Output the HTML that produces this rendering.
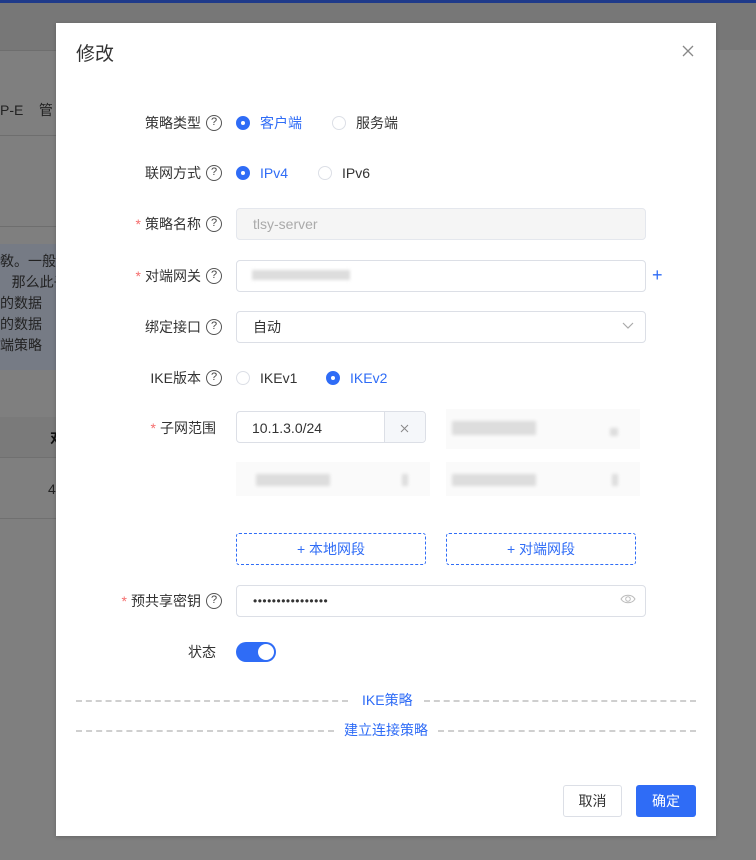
<!DOCTYPE html>
<html><head><meta charset="utf-8"><style>
*{box-sizing:border-box;margin:0;padding:0}
body{width:756px;height:860px;position:relative;overflow:hidden;background:#7f7f7f;font-family:"Liberation Sans","Noto Sans CJK SC",sans-serif;font-size:14px;color:#333}
.a{position:absolute}
.lbl{position:absolute;right:534px;font-size:14px;color:#333;white-space:nowrap;line-height:20px;display:flex;align-items:center}
.lbl.n{right:540px}
.lbl .req{color:#f56c6c;margin-right:4px}
.q{display:inline-block;width:16px;height:16px;border:1.3px solid #555;border-radius:50%;font-size:11px;line-height:13px;text-align:center;margin-left:5px;color:#444}
.inp{position:absolute;left:236px;width:410px;height:32px;border:1px solid #dcdfe6;border-radius:4px;background:#fff;padding-left:16px;line-height:30px;font-size:14px}
.radio{position:absolute;width:14px;height:14px;border-radius:50%;border:1px solid #dcdfe6;background:#fff}
.radio.on{background:#2f6cf6;border-color:#2f6cf6}
.radio.on:after{content:"";position:absolute;left:4px;top:4px;width:4px;height:4px;border-radius:50%;background:#fff}
.rt{position:absolute;line-height:20px}
.blur{position:absolute;background:#fafafa}
.bl{position:absolute;background:#ddd;filter:blur(1.5px)}
.dash{position:absolute;height:0;border-top:2px dashed #cfcfcf}
</style></head><body>
<div class="a" style="left:0;top:0;width:756px;height:3px;background:#1f3a8a"></div>
<div class="a" style="left:0;top:3px;width:756px;height:47px;background:#777"></div>
<div class="a" style="left:0;top:50px;width:56px;height:1px;background:#6e6e6e"></div>
<div class="a" style="left:0;top:100px;width:56px;font-size:14px;color:#222;line-height:20px">P-E&nbsp;&nbsp;&nbsp;&nbsp;管</div>
<div class="a" style="left:0;top:135px;width:56px;height:1px;background:#6e6e6e"></div>
<div class="a" style="left:0;top:226px;width:56px;height:1px;background:#6e6e6e"></div>
<div class="a" style="left:0;top:244px;width:56px;height:126px;background:#767b85;color:#222;font-size:14px;line-height:21px;padding-top:7px;white-space:nowrap;overflow:hidden">
<div>敎。一般设</div><div>&nbsp;&nbsp;&nbsp;那么此子</div><div>的数据</div><div>的数据</div><div>端策略</div></div>
<div class="a" style="left:0;top:417px;width:56px;height:40px;background:#7a7a7a"></div>
<div class="a" style="left:50px;top:428px;color:#111;font-weight:bold">对</div>
<div class="a" style="left:48px;top:481px;color:#222">4</div>
<div class="a" style="left:0;top:457px;width:56px;height:1px;background:#707070"></div>
<div class="a" style="left:0;top:518px;width:56px;height:1px;background:#707070"></div>

<div class="a" style="left:56px;top:23px;width:660px;height:813px;background:#fff;box-shadow:0 1px 4px rgba(0,0,0,.2)">
</div>
<div class="a" style="left:76px;top:43px;font-size:19px;color:#333;line-height:24px">修改</div>
<svg class="a" style="left:682px;top:45px" width="12" height="12"><path d="M1 1L11 11M11 1L1 11" stroke="#888" stroke-width="1.3"/></svg>

<div class="lbl" style="top:113px">策略类型<span class="q">?</span></div>
<div class="radio on" style="left:236px;top:116px"></div><div class="rt" style="left:260px;top:113px;color:#2f6cf6">客户端</div>
<div class="radio" style="left:332px;top:116px"></div><div class="rt" style="left:356px;top:113px">服务端</div>

<div class="lbl" style="top:163px">联网方式<span class="q">?</span></div>
<div class="radio on" style="left:236px;top:166px"></div><div class="rt" style="left:260px;top:163px;color:#2f6cf6">IPv4</div>
<div class="radio" style="left:318px;top:166px"></div><div class="rt" style="left:342px;top:163px">IPv6</div>

<div class="lbl" style="top:214px"><span class="req">*</span>策略名称<span class="q">?</span></div>
<div class="inp" style="top:208px;background:#f5f5f5;border-color:#e4e7ed;color:#aaa">tlsy-server</div>

<div class="lbl" style="top:266px"><span class="req">*</span>对端网关<span class="q">?</span></div>
<div class="inp" style="top:260px"></div>
<div class="bl" style="left:252px;top:270px;width:98px;height:10px"></div>
<div class="a" style="left:652px;top:263px;color:#2f6cf6;font-size:18px;line-height:24px">+</div>

<div class="lbl" style="top:317px">绑定接口<span class="q">?</span></div>
<div class="inp" style="top:311px">自动</div>
<svg class="a" style="left:622px;top:322px" width="12" height="8"><path d="M1 1L6 6L11 1" stroke="#aaa" fill="none" stroke-width="1.2"/></svg>

<div class="lbl" style="top:368px">IKE版本<span class="q">?</span></div>
<div class="radio" style="left:236px;top:371px"></div><div class="rt" style="left:260px;top:368px">IKEv1</div>
<div class="radio on" style="left:326px;top:371px"></div><div class="rt" style="left:350px;top:368px;color:#2f6cf6">IKEv2</div>

<div class="lbl n" style="top:418px"><span class="req">*</span>子网范围</div>
<div class="a" style="left:236px;top:411px;width:190px;height:32px;border:1px solid #dcdfe6;border-radius:4px;background:#fff"></div>
<div class="a" style="left:384px;top:412px;width:41px;height:30px;background:#f5f7fa;border-left:1px solid #dcdfe6;border-radius:0 4px 4px 0"></div>
<div class="a" style="left:252px;top:418px;line-height:20px">10.1.3.0/24</div>
<svg class="a" style="left:400px;top:424px" width="9" height="9"><path d="M1 1L8 8M8 1L1 8" stroke="#888" stroke-width="1"/></svg>
<div class="blur" style="left:446px;top:409px;width:194px;height:40px"></div>
<div class="bl" style="left:452px;top:421px;width:84px;height:14px"></div>
<div class="bl" style="left:610px;top:428px;width:8px;height:8px"></div>
<div class="blur" style="left:236px;top:462px;width:194px;height:34px"></div>
<div class="bl" style="left:256px;top:474px;width:74px;height:12px"></div>
<div class="bl" style="left:402px;top:474px;width:6px;height:12px"></div>
<div class="blur" style="left:446px;top:462px;width:194px;height:34px"></div>
<div class="bl" style="left:452px;top:474px;width:84px;height:12px"></div>
<div class="bl" style="left:612px;top:474px;width:6px;height:12px"></div>

<div class="a" style="left:236px;top:533px;width:190px;height:32px;border:1px dashed #2f6cf6;border-radius:3px;color:#2f6cf6;text-align:center;line-height:30px">+ 本地网段</div>
<div class="a" style="left:446px;top:533px;width:190px;height:32px;border:1px dashed #2f6cf6;border-radius:3px;color:#2f6cf6;text-align:center;line-height:30px">+ 对端网段</div>

<div class="lbl" style="top:591px"><span class="req">*</span>预共享密钥<span class="q">?</span></div>
<div class="inp" style="top:585px;font-size:12px;letter-spacing:0.5px;color:#333">••••••••••••••••</div>
<svg class="a" style="left:620px;top:593px" width="16" height="12"><path d="M1 6C4 1 12 1 15 6C12 11 4 11 1 6Z" stroke="#bbb" fill="none"/><circle cx="8" cy="6" r="2.3" stroke="#bbb" fill="none"/></svg>

<div class="lbl n" style="top:642px">状态</div>
<div class="a" style="left:236px;top:642px;width:40px;height:20px;border-radius:10px;background:#2f6cf6"></div>
<div class="a" style="left:258px;top:644px;width:16px;height:16px;border-radius:50%;background:#fff"></div>

<div class="dash" style="left:76px;top:700px;width:272px"></div>
<div class="a" style="left:362px;top:690px;color:#2f6cf6;line-height:20px">IKE策略</div>
<div class="dash" style="left:424px;top:700px;width:272px"></div>
<div class="dash" style="left:76px;top:730px;width:258px"></div>
<div class="a" style="left:344px;top:720px;color:#2f6cf6;line-height:20px">建立连接策略</div>
<div class="dash" style="left:438px;top:730px;width:258px"></div>

<div class="a" style="left:563px;top:785px;width:59px;height:32px;border:1px solid #dcdfe6;border-radius:3px;text-align:center;line-height:30px">取消</div>
<div class="a" style="left:636px;top:785px;width:60px;height:32px;background:#2f6cf6;border-radius:3px;color:#fff;text-align:center;line-height:32px">确定</div>
</body></html>
